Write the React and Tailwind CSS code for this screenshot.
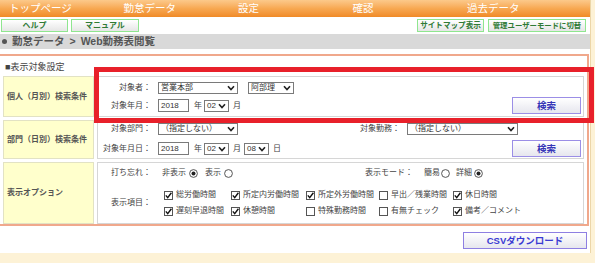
import React from "react";

function Chevron() {
  return (
    <svg width="8" height="6" viewBox="0 0 8 6" className="shrink-0">
      <path d="M1 1.2 L4 4.6 L7 1.2" fill="none" stroke="#222" strokeWidth="1.6" />
    </svg>
  );
}

function Select({ className, text }) {
  return (
    <div className={`h-[12px] border border-[#7a7a7a] bg-white flex items-center justify-between pl-[2px] pr-[2px] text-[8px] leading-none text-[#333] ${className}`}>
      <span>{text}</span>
      <Chevron />
    </div>
  );
}

function YearInput() {
  return (
    <div className="h-[13px] w-[31px] border border-[#7a7a7a] bg-white flex items-center pl-[2px] text-[8px] leading-none text-[#333]">
      2018
    </div>
  );
}

function Check({ on }) {
  return (
    <svg width="9" height="9" viewBox="0 0 9 9" className="shrink-0">
      <rect x="0.5" y="0.5" width="8" height="8" fill="white" stroke="#555" />
      {on && <path d="M1.8 4.4 L3.7 6.6 L7.4 1.8" fill="none" stroke="#111" strokeWidth="1.4" />}
    </svg>
  );
}

function Radio({ on }) {
  return (
    <svg width="9" height="9" viewBox="0 0 9 9" className="shrink-0">
      <circle cx="4.5" cy="4.5" r="3.9" fill="white" stroke="#444" strokeWidth="0.9" />
      {on && <circle cx="4.5" cy="4.5" r="2" fill="#222" />}
    </svg>
  );
}

function GreenBtn({ className, children }) {
  return (
    <div className={`h-[13px] border border-[#8fe68f] bg-linear-to-b from-white to-[#e6e6e6] text-[#2f7a35] font-bold flex items-center justify-center leading-none whitespace-nowrap overflow-hidden ${className}`}>
      {children}
    </div>
  );
}

function SearchBtn() {
  return (
    <div className="w-[69px] h-[17px] border border-[#9b8ee6] bg-linear-to-b from-white to-[#e6e6ee] text-[#3636b8] text-[9.5px] font-bold flex items-center justify-center leading-none">
      検索
    </div>
  );
}

function CheckItem({ on, label, className }) {
  return (
    <div className={`flex items-center gap-[3px] ${className}`}>
      <Check on={on} />
      <span>{label}</span>
    </div>
  );
}

export default function App() {
  return (
    <div className="relative w-[595px] h-[263px] overflow-hidden bg-[#fdf2d6] font-['Liberation_Sans','Noto_Sans_CJK_JP',sans-serif] text-[#444]">
      <div className="w-[591px] h-[253px] bg-white border-r border-[#ecd6a8]">
        {/* header */}
        <div className="h-[17px] w-[590px] bg-linear-to-b from-[#fcc98a] via-[#f7a851] to-[#f08a26] flex pl-[9px] text-white text-[10.5px] leading-[17px]">
          <div className="w-[114.5px]">トップページ</div>
          <div className="w-[114.5px]">勤怠データ</div>
          <div className="w-[114.5px]">設定</div>
          <div className="w-[114.5px]">確認</div>
          <div className="w-[114.5px]">過去データ</div>
        </div>

        {/* button row */}
        <div className="mt-[2px] h-[13px] flex justify-between pl-[1px] pr-[4px]">
          <div className="flex gap-[3px]">
            <GreenBtn className="w-[67px] text-[8px]">ヘルプ</GreenBtn>
            <GreenBtn className="w-[68px] text-[8px]">マニュアル</GreenBtn>
          </div>
          <div className="flex gap-[4px]">
            <GreenBtn className="w-[67px] text-[7.6px]">サイトマップ表示</GreenBtn>
            <GreenBtn className="w-[98px] text-[7.4px]">管理ユーザーモードに切替</GreenBtn>
          </div>
        </div>

        {/* breadcrumb */}
        <div className="mt-[2px] h-[15px] w-[590px] bg-[#d9d9d9] flex items-center pl-[2px] text-[10.5px] font-bold text-[#555] leading-none">
          <span className="inline-block w-[5px] h-[5px] rounded-full bg-[#555] mr-[5px]" />
          <span>勤怠データ</span>
          <span className="mx-[5px]">&gt;</span>
          <span>Web勤務表閲覧</span>
        </div>

        {/* box */}
        <div className="mt-[5px] w-[589px] h-[172px] border-t-2 border-r-2 border-b-2 border-[#f0a88c]">
          <div className="h-[20px] pt-[6px] pl-[5px] text-[9px] leading-[11px] text-[#444]">■表示対象設定</div>
          <div className="ml-[3px] flex flex-col gap-[3px] text-[8px] leading-none">
            {/* row 1 */}
            <div className="flex gap-[3px] h-[41px]">
              <div className="w-[91px] bg-[#ffffcc] border border-[#e2e2c4] flex items-center pl-[3px] font-bold text-[#555]">個人（月別）検索条件</div>
              <div className="w-[487px] border border-[#d6d6d6] pt-[5px] flex flex-col gap-[3px]">
                <div className="flex items-center h-[12px]">
                  <div className="w-[53px] text-right">対象者：</div>
                  <Select className="ml-[7px] w-[80px]" text="営業本部" />
                  <Select className="ml-[10px] w-[46px]" text="阿部理" />
                </div>
                <div className="flex items-center h-[17px]">
                  <div className="w-[53px] text-right">対象年月：</div>
                  <div className="ml-[7px]"><YearInput /></div>
                  <span className="ml-[5px]">年</span>
                  <Select className="ml-[2px] w-[25px]" text="02" />
                  <span className="ml-[4px]">月</span>
                  <div className="ml-auto mr-[2px]"><SearchBtn /></div>
                </div>
              </div>
            </div>

            {/* row 2 */}
            <div className="flex gap-[3px] h-[39px]">
              <div className="w-[91px] bg-[#ffffcc] border border-[#e2e2c4] flex items-center pl-[3px] font-bold text-[#555]">部門（日別）検索条件</div>
              <div className="w-[487px] border border-[#d6d6d6] pt-[2px] flex flex-col gap-[5px]">
                <div className="flex items-center h-[12px]">
                  <div className="w-[53px] text-right">対象部門：</div>
                  <Select className="ml-[7px] w-[80px]" text="（指定しない）" />
                  <div className="ml-[122px]">対象勤務：</div>
                  <Select className="ml-[7px] w-[111px]" text="（指定しない）" />
                </div>
                <div className="flex items-center h-[17px]">
                  <div className="w-[53px] text-right">対象年月日：</div>
                  <div className="ml-[7px]"><YearInput /></div>
                  <span className="ml-[5px]">年</span>
                  <Select className="ml-[2px] w-[25px]" text="02" />
                  <span className="ml-[4px]">月</span>
                  <Select className="ml-[3px] w-[25px]" text="08" />
                  <span className="ml-[4px]">日</span>
                  <div className="ml-auto mr-[2px]"><SearchBtn /></div>
                </div>
              </div>
            </div>

            {/* row 3 */}
            <div className="flex gap-[3px] h-[62px]">
              <div className="w-[91px] bg-[#ffffcc] border border-[#e2e2c4] flex items-center pl-[3px] font-bold text-[#555]">表示オプション</div>
              <div className="w-[487px] border border-[#d6d6d6] pt-[4px] flex flex-col">
                <div className="flex items-center h-[12px]">
                  <div className="w-[53px] text-right">打ち忘れ：</div>
                  <span className="ml-[11px]">非表示</span>
                  <span className="ml-[3px]"><Radio on /></span>
                  <span className="ml-[7px]">表示</span>
                  <span className="ml-[3px]"><Radio /></span>
                  <span className="ml-[132px]">表示モード：</span>
                  <span className="ml-[11px]">簡易</span>
                  <span className="ml-[1px]"><Radio /></span>
                  <span className="ml-[6px]">詳細</span>
                  <span className="ml-[2px]"><Radio on /></span>
                </div>
                <div className="flex items-center mt-[10px] h-[28px]">
                  <div className="w-[53px] text-right">表示項目：</div>
                  <div className="ml-[13px] flex flex-col gap-[4px]">
                    <div className="flex items-center h-[12px]">
                      <CheckItem on label="総労働時間" className="w-[67px]" />
                      <CheckItem on label="所定内労働時間" className="w-[75px]" />
                      <CheckItem on label="所定外労働時間" className="w-[73px]" />
                      <CheckItem label="早出／残業時間" className="w-[74px]" />
                      <CheckItem on label="休日時間" />
                    </div>
                    <div className="flex items-center h-[12px]">
                      <CheckItem on label="遅刻早退時間" className="w-[67px]" />
                      <CheckItem on label="休憩時間" className="w-[75px]" />
                      <CheckItem label="特殊勤務時間" className="w-[73px]" />
                      <CheckItem label="有無チェック" className="w-[74px]" />
                      <CheckItem on label="備考／コメント" />
                    </div>
                  </div>
                </div>
              </div>
            </div>
          </div>
        </div>

        {/* CSV */}
        <div className="mt-[6px] flex justify-end pr-[3px]">
          <div className="w-[124px] h-[17px] border border-[#8e7fe2] bg-linear-to-b from-white to-[#e6e6ee] text-[#3a3ad2] text-[9.5px] font-bold flex items-center justify-center leading-none">
            CSVダウンロード
          </div>
        </div>
      </div>

      {/* red highlight overlay */}
      <div className="absolute left-[94px] top-[67px] w-[500px] h-[56px] border-[5px] border-[#e8202a] pointer-events-none" />
    </div>
  );
}
